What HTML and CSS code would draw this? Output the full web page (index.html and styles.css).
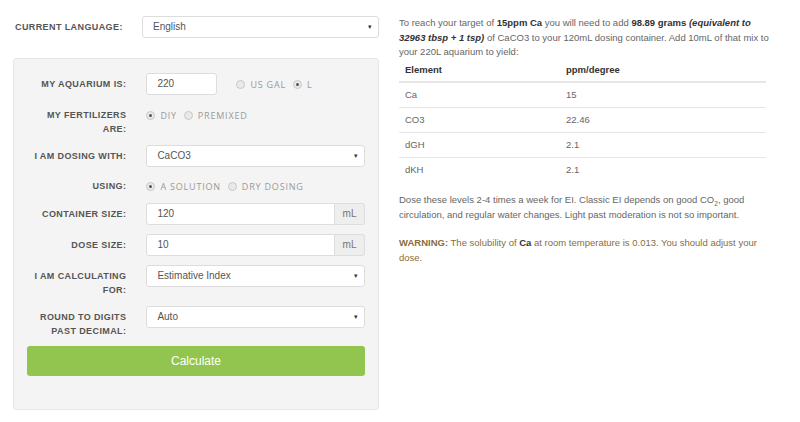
FILE: index.html
```html
<!DOCTYPE html>
<html lang="en">
<head>
    <meta charset="UTF-8">
    <meta name="viewport" content="width=device-width, initial-scale=1.0">
    <title>Fertilizer Calculator</title>

    <link rel="stylesheet" href="styles.css">
</head>
<body>
    <div class="wrap">
        <section class="calc">
            <div class="lang">
                <label>Current Language:</label>
                <div class="select">English</div>
            </div>

            <form class="panel">
                <div class="row">
                    <label>My aquarium is:</label>
                    <div class="field">
                        <div class="input small">220</div>
                        <span class="radio"><i></i>US Gal</span>
                        <span class="radio on"><i></i>L</span>
                    </div>
                </div>
                <div class="row two">
                    <label>My fertilizers are:</label>
                    <div class="field">
                        <span class="radio on"><i></i>DIY</span>
                        <span class="radio"><i></i>Premixed</span>
                    </div>
                </div>
                <div class="row">
                    <label>I am dosing with:</label>
                    <div class="field">
                        <div class="select">CaCO3</div>
                    </div>
                </div>
                <div class="row thin">
                    <label>Using:</label>
                    <div class="field">
                        <span class="radio on"><i></i>A solution</span>
                        <span class="radio"><i></i>Dry dosing</span>
                    </div>
                </div>
                <div class="row">
                    <label>Container size:</label>
                    <div class="field group">
                        <div class="input">120</div>
                        <span class="addon">mL</span>
                    </div>
                </div>
                <div class="row">
                    <label>Dose size:</label>
                    <div class="field group">
                        <div class="input">10</div>
                        <span class="addon">mL</span>
                    </div>
                </div>
                <div class="row two">
                    <label>I am calculating for:</label>
                    <div class="field">
                        <div class="select">Estimative Index</div>
                    </div>
                </div>
                <div class="row two">
                    <label>Round to digits past decimal:</label>
                    <div class="field">
                        <div class="select">Auto</div>
                    </div>
                </div>
                <button type="button" class="btn">Calculate</button>
            </form>
        </section>

        <section class="result">
            <p>To reach your target of <b>15ppm Ca</b> you will need to add <b>98.89 grams <i>(equivalent to 32963 tbsp + 1 tsp)</i></b> of CaCO3 to your 120mL dosing container. Add 10mL of that mix to your 220L aquarium to yield:</p>
            <table>
                <thead>
                    <tr><th>Element</th><th>ppm/degree</th></tr>
                </thead>
                <tbody>
                    <tr><td>Ca</td><td>15</td></tr>
                    <tr><td>CO3</td><td>22.46</td></tr>
                    <tr><td>dGH</td><td>2.1</td></tr>
                    <tr><td>dKH</td><td>2.1</td></tr>
                </tbody>
            </table>
            <p class="note">Dose these levels 2-4 times a week for EI. Classic EI depends on good CO<sub>2</sub>, good circulation, and regular water changes. Light past moderation is not so important.</p>
            <p class="warn"><b>WARNING:</b> The solubility of <strong>Ca</strong> at room temperature is 0.013. You should adjust your dose.</p>
        </section>
    </div>
</body>
</html>
```

FILE: styles.css
```css
* {
    margin:0;
    padding:0;
    box-sizing:border-box;
}

body {
    background:#fff;
    font-family:"Liberation Sans", Arial, sans-serif;
    font-size:10px;
    color:#666;
}

.wrap {
    display:flex;
    padding:16px 0 0 13px;
}

.calc {
    width:366px;
}

/* 라벨 공통 */
label {
    font-weight:bold;
    font-size:9px;
    letter-spacing:0.4px;
    text-transform:uppercase;
    color:#555;
    line-height:14px;
}

.lang {
    display:flex;
    align-items:center;
    padding-left:2px;
}

.lang label {
    width:127px;
}

.select,
.input {
    position:relative;
    height:22px;
    line-height:20px;
    padding:0 10px;
    background:#fff;
    border:1px solid #ddd;
    border-radius:3px;
    font-size:10px;
    color:#555;
}

.select {
    flex:1;
}

.select::after {
    content:'\25BE';
    position:absolute;
    right:6px;
    top:0;
    font-size:7px;
    color:#333;
}

.panel {
    margin-top:20px;
    padding:14px 13px 33px;
    background:#f4f4f4;
    border:1px solid #e6e6e6;
    border-radius:3px;
}

.row {
    display:flex;
    align-items:center;
    margin-bottom:9px;
}

.row:nth-child(5) {
    margin-top:-2px;
}

.row:nth-last-of-type(1) {
    margin-bottom:8px;
}

.row label {
    width:100px;
    margin-right:20px;
    text-align:right;
}

.row.two {
    align-items:flex-start;
}

.row.two label {
    padding-top:4px;
}

.row.thin {
    height:20px;
}

.field {
    display:flex;
    align-items:center;
    width:220px;
    min-height:22px;
}

.row.two .field {
    height:22px;
}

.input.small {
    width:71px;
    margin-right:19px;
}

.group .input {
    flex:1;
    border-radius:3px 0 0 3px;
}

.addon {
    width:30px;
    height:22px;
    line-height:20px;
    text-align:center;
    background:#eee;
    border:1px solid #ddd;
    border-left:none;
    border-radius:0 3px 3px 0;
    font-size:10px;
    color:#777;
}

/* 라디오 버튼 */
.radio {
    display:flex;
    align-items:center;
    margin-right:7px;
    font-family:"Open Sans", sans-serif;
    font-size:9px;
    letter-spacing:0.8px;
    text-transform:uppercase;
    color:#999;
}

.radio i {
    position:relative;
    width:9px;
    height:9px;
    margin-right:5px;
    border:1px solid #c8c8c8;
    border-radius:50%;
    background:#e9e9e9;
}

.radio.on i::after {
    content:'';
    position:absolute;
    top:2px;
    left:2px;
    width:3px;
    height:3px;
    border-radius:50%;
    background:#555;
}

.btn {
    display:block;
    width:100%;
    height:30px;
    border:none;
    border-radius:3px;
    background:#92c54f;
    color:#fff;
    font-family:"Liberation Sans", Arial, sans-serif;
    font-size:12px;
}

/* 결과 영역 */
.result {
    width:372px;
    margin-left:20px;
    font-size:9.5px;
    line-height:14.5px;
}

.result b,
.result strong {
    color:#333;
}

.result table {
    width:367px;
    border-collapse:collapse;
}

.result th,
.result td {
    padding:5px 6px;
    text-align:left;
    border-top:1px solid #e6e6e6;
    line-height:14px;
}

.result th {
    padding:3px 6px 4px;
    border-top:none;
    border-bottom:2px solid #e6e6e6;
    color:#333;
}

.result th:first-child {
    width:161px;
}

.result td {
    height:25px;
}

.note {
    margin-top:11px;
}

sub {
    font-size:6.5px;
    line-height:0;
}

.warn {
    margin-top:14px;
    color:#8a6d3b;
}

.warn b {
    color:#8a6d3b;
}
```
